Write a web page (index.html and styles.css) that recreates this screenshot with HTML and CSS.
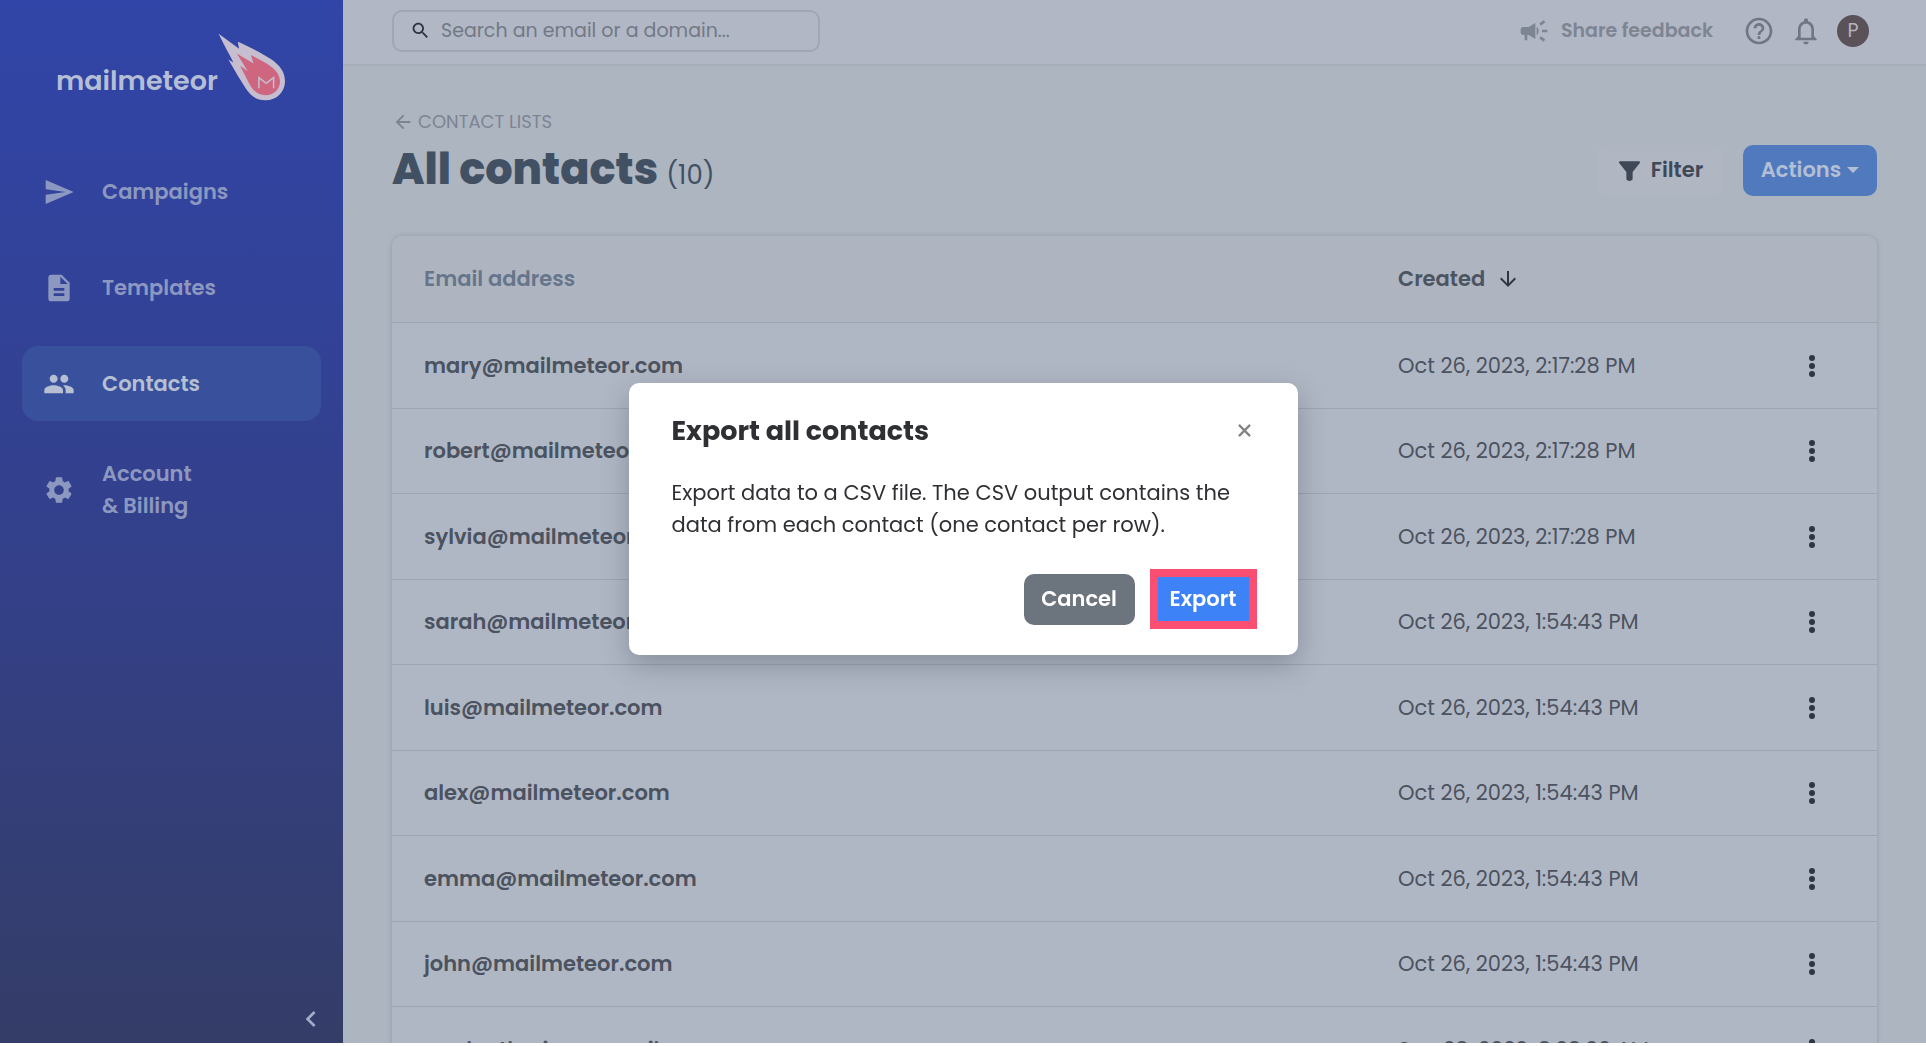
FILE: index.html
```html
<!DOCTYPE html>
<html lang="en">
<head>
<meta charset="utf-8">
<title>All contacts - Mailmeteor</title>
<link rel="stylesheet" href="styles.css">
</head>
<body>
<div class="app">
  <aside class="sidebar">
    <a class="brand" href="#">
      <span class="brand-name">mailmeteor</span>
      <svg class="brand-mark" viewBox="655 99 203 203" aria-hidden="true">
        <path fill="#c6bdce" d="M657 101 718 146 714 125C745 138 790 162 815 178C840 196 855 215 855 243C855 275 830 300 797 300C765 300 750 283 738 265L715 228 686 178 701 187C688 160 670 130 657 101Z"/>
        <path fill="#cf6680" d="M711 160 761 190 753 165C768 172 785 181 800 190C825 205 840 222 840 244C840 268 820 285 797 285C772 285 758 268 748 250L721 197 744 213Z"/>
        <path fill="none" stroke="#c6bdce" stroke-width="4.500" d="M777 264V232L799 249 821 232V264"/>
      </svg>
    </a>
    <nav class="nav">
      <a class="nav-item" href="#"><svg class="icon icon-nav" viewBox="0 0 24 24"><path d="M2.01 21 23 12 2.01 3 2 10l15 2-15 2z"/></svg><span>Campaigns</span></a>
      <a class="nav-item" href="#"><svg class="icon icon-nav" viewBox="0 0 24 24"><path d="M14 2H6c-1.100 0-1.990.9-1.990 2L4 20c0 1.100.89 2 1.990 2H18c1.100 0 2-.9 2-2V8l-6-6zm2 16H8v-2h8v2zm0-4H8v-2h8v2zm-3-5V3.500L18.500 9H13z"/></svg><span>Templates</span></a>
      <a class="nav-item nav-item-active" href="#"><svg class="icon icon-nav" viewBox="0 0 24 24"><path d="M16 11c1.660 0 2.990-1.340 2.990-3S17.660 5 16 5c-1.660 0-3 1.340-3 3s1.340 3 3 3zm-8 0c1.660 0 2.990-1.340 2.990-3S9.660 5 8 5C6.340 5 5 6.340 5 8s1.340 3 3 3zm0 2c-2.330 0-7 1.170-7 3.500V19h14v-2.500c0-2.330-4.670-3.500-7-3.500zm8 0c-.29 0-.62.02-.97.05 1.160.84 1.970 1.970 1.970 3.450V19h6v-2.500c0-2.330-4.670-3.500-7-3.500z"/></svg><span>Contacts</span></a>
      <a class="nav-item" href="#"><svg class="icon icon-nav" viewBox="0 0 24 24"><path d="M19.140 12.940c.04-.3.06-.61.06-.94 0-.32-.02-.64-.07-.94l2.030-1.580c.18-.14.23-.41.12-.61l-1.920-3.320c-.12-.22-.37-.29-.59-.22l-2.390.96c-.5-.38-1.030-.7-1.620-.94l-.36-2.540c-.04-.24-.24-.41-.48-.41h-3.840c-.24 0-.43.17-.47.41l-.36 2.540c-.59.24-1.130.57-1.620.94l-2.390-.96c-.22-.08-.47 0-.59.22L2.740 8.870c-.12.21-.08.47.12.61l2.030 1.580c-.05.3-.09.63-.09.94s.02.64.07.94l-2.030 1.580c-.18.14-.23.41-.12.61l1.920 3.320c.12.22.37.29.59.22l2.390-.96c.5.38 1.030.7 1.620.94l.36 2.540c.05.24.24.41.48.41h3.840c.24 0 .44-.17.47-.41l.36-2.540c.59-.24 1.130-.56 1.620-.94l2.390.96c.22.08.47 0 .59-.22l1.920-3.320c.12-.22.07-.47-.12-.61l-2.010-1.580zM12 15.600c-1.980 0-3.600-1.620-3.600-3.600s1.620-3.600 3.600-3.600 3.600 1.620 3.600 3.600-1.620 3.600-3.600 3.600z"/></svg><span>Account<br>&amp; Billing</span></a>
    </nav>
    <button class="collapse" type="button" aria-label="Collapse menu"><svg class="icon icon-nav" viewBox="0 0 24 24"><path d="M15.410 7.410 14 6l-6 6 6 6 1.410-1.410L10.830 12z"/></svg></button>
  </aside>

  <div class="page">
    <header class="topbar">
      <label class="search">
        <svg class="icon icon-search" viewBox="0 0 24 24" role="img" aria-label="Search"><path d="M15.500 14h-.79l-.28-.27C15.410 12.590 16 11.110 16 9.500 16 5.910 13.090 3 9.500 3S3 5.910 3 9.500 5.910 16 9.500 16c1.610 0 3.090-.59 4.230-1.570l.27.28v.79l5 4.990L20.490 19l-4.990-5zm-6 0C7.010 14 5 11.990 5 9.500S7.010 5 9.500 5 14 7.010 14 9.500 11.990 14 9.500 14z"/></svg>
        <input class="search-input" type="search" placeholder="Search an email or a domain...">
      </label>
      <div class="tools">
        <a class="feedback" href="#"><svg class="icon icon-top" viewBox="0 0 24 24"><path d="M18 11v2h4v-2h-4zm-2 6.610c.96.71 2.210 1.650 3.200 2.390.4-.53.8-1.070 1.200-1.600-.99-.74-2.240-1.680-3.200-2.400-.4.540-.8 1.080-1.200 1.610zM20.400 5.600c-.4-.53-.8-1.070-1.200-1.600-.99.74-2.240 1.680-3.200 2.400.4.530.8 1.070 1.200 1.600.96-.72 2.210-1.650 3.200-2.400zM4 9c-1.100 0-2 .9-2 2v2c0 1.100.9 2 2 2h1v4h2v-4h1l5 3V6L8 9H4zm11.500 3c0-1.330-.58-2.530-1.500-3.350v6.690c.92-.81 1.500-2.010 1.500-3.340z"/></svg><span>Share feedback</span></a>
        <button class="tool" type="button" aria-label="Help"><svg class="icon icon-help" viewBox="0 0 24 24"><path d="M11 18h2v-2h-2v2zm1-16C6.480 2 2 6.480 2 12s4.480 10 10 10 10-4.480 10-10S17.520 2 12 2zm0 18c-4.410 0-8-3.590-8-8s3.590-8 8-8 8 3.590 8 8-3.590 8-8 8zm0-14c-2.210 0-4 1.790-4 4h2c0-1.100.9-2 2-2s2 .9 2 2c0 2-3 1.750-3 5h2c0-2.250 3-2.500 3-5 0-2.210-1.790-4-4-4z"/></svg></button>
        <button class="tool" type="button" aria-label="Notifications"><svg class="icon icon-help" viewBox="0 0 24 24"><path d="M12 22c1.100 0 2-.9 2-2h-4c0 1.100.9 2 2 2zm6-6v-5c0-3.070-1.630-5.640-4.500-6.320V4c0-.83-.67-1.500-1.500-1.500s-1.500.67-1.500 1.500v.68C7.640 5.360 6 7.920 6 11v5l-2 2v1h16v-1l-2-2zm-2 1H8v-6c0-2.480 1.510-4.500 4-4.500s4 2.020 4 4.500v6z"/></svg></button>
        <button class="avatar" type="button">P</button>
      </div>
    </header>

    <main class="content">
      <a class="back" href="#"><svg class="icon icon-back" viewBox="0 0 24 24"><path d="M20 11H7.830l5.590-5.590L12 4l-8 8 8 8 1.410-1.410L7.830 13H20v-2z"/></svg>CONTACT LISTS</a>
      <div class="heading">
        <h1 class="title">All contacts <span class="count">(10)</span></h1>
        <div class="actions">
          <button class="btn btn-filter" type="button"><svg class="icon icon-filter" viewBox="0 0 24 24"><path d="M3 3h18c1 0 1.500 1 .9 1.800L15 13.500V20c0 2.700-6 2.700-6 0v-6.500L2.100 4.800C1.500 4 2 3 3 3z"/></svg>Filter</button>
          <button class="btn btn-actions" type="button">Actions<span class="caret"></span></button>
        </div>
      </div>

      <table class="contacts">
        <thead><tr><th class="col-email">Email address</th><th class="col-created"><span class="sort">Created<svg class="icon icon-sort" viewBox="0 0 24 24"><path d="m20 12-1.410-1.410L13 16.170V4h-2v12.170l-5.580-5.590L4 12l8 8 8-8z"/></svg></span></th><th class="col-menu"></th></tr></thead>
        <tbody>
          <tr><td>mary@mailmeteor.com</td><td>Oct 26, 2023, 2:17:28 PM</td><td><button class="more" type="button" aria-label="More"><i></i><i></i><i></i></button></td></tr>
          <tr><td>robert@mailmeteor.com</td><td>Oct 26, 2023, 2:17:28 PM</td><td><button class="more" type="button" aria-label="More"><i></i><i></i><i></i></button></td></tr>
          <tr><td>sylvia@mailmeteor.com</td><td>Oct 26, 2023, 2:17:28 PM</td><td><button class="more" type="button" aria-label="More"><i></i><i></i><i></i></button></td></tr>
          <tr><td>sarah@mailmeteor.com</td><td>Oct 26, 2023, 1:54:43 PM</td><td><button class="more" type="button" aria-label="More"><i></i><i></i><i></i></button></td></tr>
          <tr><td>luis@mailmeteor.com</td><td>Oct 26, 2023, 1:54:43 PM</td><td><button class="more" type="button" aria-label="More"><i></i><i></i><i></i></button></td></tr>
          <tr><td>alex@mailmeteor.com</td><td>Oct 26, 2023, 1:54:43 PM</td><td><button class="more" type="button" aria-label="More"><i></i><i></i><i></i></button></td></tr>
          <tr><td>emma@mailmeteor.com</td><td>Oct 26, 2023, 1:54:43 PM</td><td><button class="more" type="button" aria-label="More"><i></i><i></i><i></i></button></td></tr>
          <tr><td>john@mailmeteor.com</td><td>Oct 26, 2023, 1:54:43 PM</td><td><button class="more" type="button" aria-label="More"><i></i><i></i><i></i></button></td></tr>
          <tr><td>paulcatherine@gmail.com</td><td>Sep 28, 2023, 8:38:30 AM</td><td><button class="more" type="button" aria-label="More"><i></i><i></i><i></i></button></td></tr>
        </tbody>
      </table>
    </main>
  </div>
</div>

<div class="overlay">
  <section class="modal" role="dialog" aria-modal="true" aria-labelledby="modal-title">
    <header class="modal-head">
      <h2 class="modal-title" id="modal-title">Export all contacts</h2>
      <button class="close" type="button" aria-label="Close"><svg class="close-icon" viewBox="0 0 14 14"><path d="M1 1 13 13M13 1 1 13"/></svg></button>
    </header>
    <p class="modal-text">Export data to a CSV file. The CSV output contains the data from each contact (one contact per row).</p>
    <footer class="modal-foot">
      <button class="btn btn-cancel" type="button">Cancel</button>
      <button class="btn btn-export" type="button">Export</button>
    </footer>
  </section>
</div>
</body>
</html>
```

FILE: styles.css
```css
*, *::before, *::after { box-sizing: border-box; }

body {
  margin: 0;
  height: 100vh;
  overflow: hidden;
  padding-bottom: 3px;
  background: #fff;
  color: #4b5260;
  font-family: Poppins, Inter, "Noto Sans", sans-serif;
  font-size: 21px;
  line-height: 32px;
}

a { color: inherit; text-decoration: none; }
button { font: inherit; color: inherit; border: 0; background: none; padding: 0; }
.icon { fill: currentColor; flex: none; display: block; }

.app { display: flex; height: 100%; overflow: hidden; background: #adb5c1; }

/* Sidebar */
.sidebar {
  flex: none;
  width: 343px;
  display: flex;
  flex-direction: column;
  padding: 32px 22px 8px;
  background: linear-gradient(#3145a8, #33408c 50%, #343d67);
  color: #8c98c0;
}
.brand { display: flex; padding: 0 34px; height: 70px; color: #b4bfd6; }
.brand-name { margin-top: 33px; font-size: 27px; font-weight: 600; }
.brand-mark { width: 68px; height: 68px; flex: none; margin-top: 1px; }
.nav { display: flex; flex-direction: column; gap: 21px; margin-top: 52px; }
.nav-item {
  display: flex;
  align-items: center;
  gap: 27px;
  min-height: 75px;
  padding: 16px 21px;
  border-radius: 16px;
  font-weight: 600;
}
.nav-item-active { background: #39519c; color: #b6c0d2; }
.icon-nav { width: 32px; height: 32px; }
.collapse { margin-top: auto; align-self: flex-end; padding: 0; margin-right: -6px; color: #a3adc8; }

/* Top bar */
.page { flex: 1; min-width: 0; }
.topbar {
  display: flex;
  align-items: center;
  justify-content: space-between;
  height: 66px;
  padding: 0 57px 3px 49px;
  border-bottom: 2px solid #a6aebb;
  background: #b1b7c4;
}
.search {
  display: flex;
  align-items: center;
  gap: 10px;
  width: 428px;
  height: 42px;
  padding: 0 16px;
  border: 2px solid #a0a7b4;
  border-radius: 10px;
}
.icon-search { width: 21px; height: 21px; color: #2d3440; }
.search-input {
  flex: 1;
  min-width: 0;
  border: 0;
  padding: 0;
  background: none;
  font: inherit;
  font-size: 19px;
  outline: 0;
}
.search-input::placeholder { color: #717986; opacity: 1; }
.tools { display: flex; align-items: center; color: #6f7684; }
.feedback { display: flex; align-items: center; gap: 11px; margin-right: 30px; color: #7e8592; font-size: 19px; font-weight: 600; }
.icon-top { width: 32px; height: 32px; }
.icon-help { width: 32px; height: 32px; }
.tool { margin-right: 15px; }
.avatar { width: 32px; height: 32px; border-radius: 50%; background: #5b5158; color: #b5b5bd; font-size: 19px; }

/* Content */
.content { padding: 40px 49px 0; }
.back { display: flex; align-items: center; gap: 4px; font-size: 18px; color: #7d8492; }
.icon-back { width: 22px; height: 22px; }
.heading { display: flex; align-items: center; justify-content: space-between; height: 64px; }
.title { margin: 0; padding-top: 4px; font-size: 43px; line-height: 64px; font-weight: 800; color: #425064; }
.count { font-size: 26px; font-weight: 400; }
.actions { display: flex; gap: 20px; }
.btn { display: flex; align-items: center; justify-content: center; height: 51px; border-radius: 10px; font-weight: 600; }
.btn-filter { width: 126px; gap: 9px; background: #b0b6c2; color: #3f4857; }
.icon-filter { width: 25px; height: 25px; }
.btn-actions { width: 134px; gap: 6px; background: #5079be; color: #b3bfd4; }
.caret { border: 6px solid transparent; border-top-color: currentColor; border-bottom: 0; }

.contacts {
  width: 100%;
  margin-top: 34px;
  table-layout: fixed;
  border-collapse: separate;
  border-spacing: 0;
  border-radius: 10px 10px 0 0;
  background: #b0b7c4;
  box-shadow: 0 0 5px #929ba9;
}
.contacts th { height: 87px; padding: 0 32px; text-align: left; font-weight: 600; border-bottom: 1px solid #9ca4b1; background: #aeb5c1; color: #66758b; }
.contacts th:first-child { border-top-left-radius: 10px; }
.contacts th:last-child { border-top-right-radius: 10px; }
.contacts .col-created { color: #4c5462; width: 380px; padding: 0; }
.contacts .col-menu { width: 99px; }
.contacts td { height: 86px; padding: 0; border-bottom: 1px solid #9ca4b1; white-space: nowrap; }
.contacts tr:nth-child(even) td { height: 85px; }
.contacts td:first-child { padding-left: 32px; font-weight: 600; }
.sort { display: flex; align-items: center; gap: 11px; }
.icon-sort { width: 24px; height: 24px; color: #303743; }
.more { display: flex; flex-direction: column; align-items: center; gap: 2px; width: 32px; margin-left: 18px; }
.more i { width: 6px; height: 6px; border-radius: 50%; background: #2f3643; }

/* Dialog */
.overlay { position: fixed; inset: 0; display: flex; align-items: flex-start; justify-content: center; padding-top: 383px; }
.modal { width: 669px; padding: 32px 41px 26px 43px; border-radius: 10px; background: #fff; color: #2f3033; box-shadow: 0 10px 28px rgba(40, 50, 65, .3); }
.modal-head { display: flex; justify-content: space-between; align-items: center; }
.modal-title { margin: 0; font-size: 27px; line-height: 32px; font-weight: 700; }
.close { padding: 0 6px 2px; }
.close-icon { display: block; width: 13px; height: 13px; fill: none; stroke: #858585; stroke-width: 2.5; }
.modal-text { margin: 30px 0 28px; }
.modal-foot { display: flex; justify-content: flex-end; align-items: center; gap: 15px; }
.btn-cancel { width: 111px; background: #6c757d; color: #fff; }
.btn-export { width: 107px; height: 60px; border: 8px solid #fa4f72; border-radius: 0; background: #3e82f7; color: #fff; }
```
